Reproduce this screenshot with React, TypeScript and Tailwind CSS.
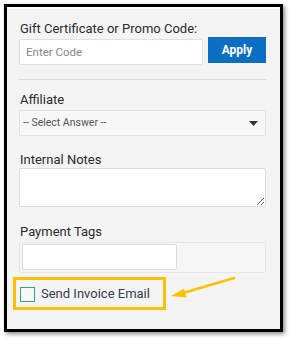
export default function App() {
  return (
    <div className="w-[290px] h-[339px] bg-white pt-[4px] pl-[4px] font-['Roboto','Liberation_Sans',sans-serif]">
      <div className="relative w-[279px] h-[328px] border-[3px] border-black bg-[#f4f4f4] shadow-[2px_2px_4px_rgba(0,0,0,0.45)]">
        <div className="h-[2px] bg-white" />
        <div className="pl-[12px] pr-[14px] pt-[12px]">
          <div className="text-[13px] leading-[16px] text-[#2b2b2b] pl-[1px]">Gift Certificate or Promo Code:</div>
          <div className="flex items-start gap-[5px]">
            <input
              placeholder="Enter Code"
              className="mt-[2px] w-[184px] h-[26px] bg-white border border-[#e0e0e0] rounded-[2px] px-[6px] text-[11.5px] text-[#333] placeholder:text-[#888] outline-none"
            />
            <button className="w-[58px] h-[26px] bg-[#0a6fc2] text-white text-[12px] font-bold">Apply</button>
          </div>

          <div className="mt-[14px] h-px bg-[#dcdcdc]" />

          <div className="mt-[12px] text-[13px] leading-[16px] text-[#2b2b2b] pl-[1px]">Affiliate</div>
          <div className="mt-[2px] h-[26px] flex items-center justify-between bg-[#f7f7f7] border border-[#e3e3e3] rounded-[2px] pl-[3px] pr-[7px]">
            <span className="text-[10.5px] text-[#555]">-- Select Answer --</span>
            <svg width="9" height="5" viewBox="0 0 9 5">
              <path d="M0 0h9L4.5 5z" fill="#333" />
            </svg>
          </div>

          <div className="mt-[16px] text-[13px] leading-[16px] text-[#2b2b2b] pl-[1px]">Internal Notes</div>
          <textarea className="block w-[247px] h-[39px] bg-white border border-[#dcdcdc] rounded-[2px] outline-none" />

          <div className="mt-[17px] text-[13px] leading-[16px] text-[#2b2b2b] pl-[1px]">Payment Tags</div>
          <div className="mt-[2px] w-[247px] h-[31px] bg-[#f6f6f6] border border-[#e6e6e6] rounded-[2px] pl-[2px] pt-[1px]">
            <div className="w-[155px] h-[26px] bg-white border border-[#dcdcdc] rounded-[2px]" />
          </div>

          <div className="mt-[4px] -ml-[6px] w-[153px] h-[33px] border-[3px] border-[#ffc000] flex items-center pl-[4px] gap-[6px]">
            <span className="w-[15px] h-[15px] border-[1.5px] border-[#3aa57a] bg-[#f7f7f7] mt-[2px]" />
            <span className="text-[13px] text-[#364050] mt-[1px]">Send Invoice Email</span>
          </div>
        </div>

        <svg className="absolute left-0 top-0" width="279" height="328" viewBox="0 0 279 328">
          <path d="M227 271 L176 286" stroke="#ffc000" strokeWidth="2.5" strokeLinecap="round" />
          <path d="M164 289 L177 281.5 L179.5 290.5 Z" fill="#ffc000" />
        </svg>
      </div>
    </div>
  );
}
